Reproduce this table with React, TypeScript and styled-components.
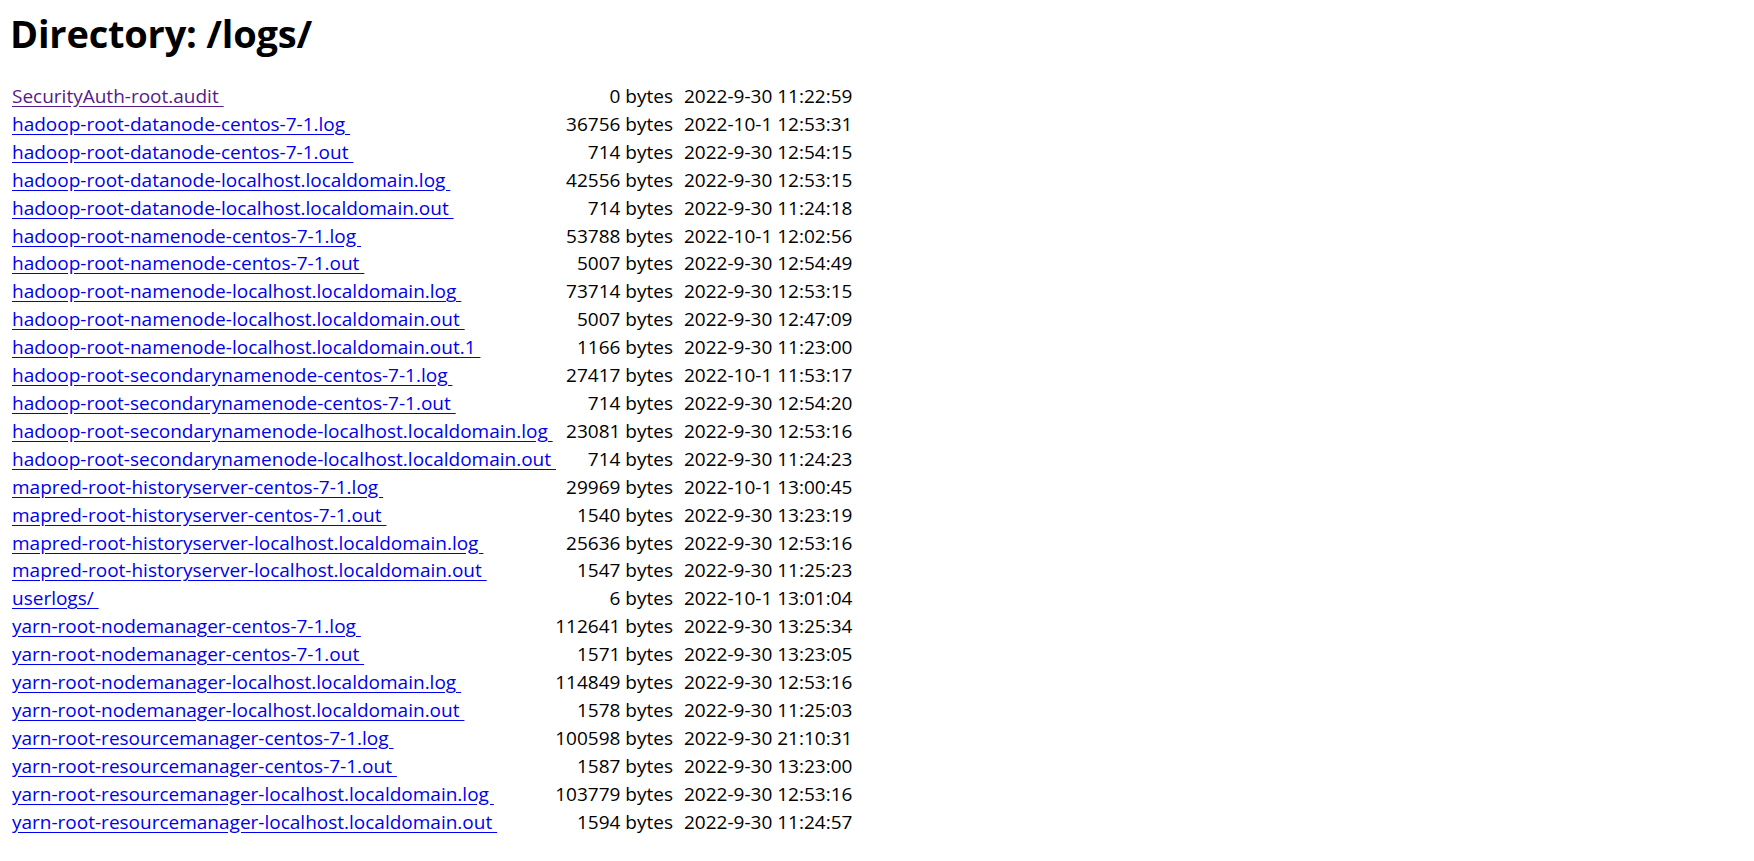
import React from "react";
import styled, { createGlobalStyle } from "styled-components";

const GlobalStyle = createGlobalStyle`
  html, body {
    margin: 0;
    padding: 0;
    background: #ffffff;
  }
  body {
    font-family: "Open Sans", "Noto Sans", "Noto Sans CJK SC", sans-serif;
    color: #000000;
  }
`;

const Page = styled.div`
  padding: 0 10px;
`;

const Title = styled.h1`
  margin: 0;
  padding-top: 6px;
  font-size: 38px;
  line-height: 54px;
  font-weight: 700;
  letter-spacing: -0.2px;
`;

const Listing = styled.div`
  display: grid;
  grid-template-columns: 440px 221px auto;
  margin-top: 23px;
  padding-left: 2px;
  font-size: 19px;
  line-height: 27.9px;
`;

const NameCell = styled.div`
  white-space: nowrap;
`;

const FileLink = styled.a<{ $visited?: boolean }>`
  color: ${(p) => (p.$visited ? "#551a8b" : "#0000ee")};
  text-decoration: underline;
  text-underline-offset: 3px;
  white-space: pre;
`;

const SizeCell = styled.div`
  text-align: right;
  white-space: nowrap;
`;

const DateCell = styled.div`
  padding-left: 11px;
  white-space: nowrap;
`;

type Entry = { name: string; size: number; date: string };

const entries: Entry[] = [
  { name: "SecurityAuth-root.audit", size: 0, date: "2022-9-30 11:22:59" },
  { name: "hadoop-root-datanode-centos-7-1.log", size: 36756, date: "2022-10-1 12:53:31" },
  { name: "hadoop-root-datanode-centos-7-1.out", size: 714, date: "2022-9-30 12:54:15" },
  { name: "hadoop-root-datanode-localhost.localdomain.log", size: 42556, date: "2022-9-30 12:53:15" },
  { name: "hadoop-root-datanode-localhost.localdomain.out", size: 714, date: "2022-9-30 11:24:18" },
  { name: "hadoop-root-namenode-centos-7-1.log", size: 53788, date: "2022-10-1 12:02:56" },
  { name: "hadoop-root-namenode-centos-7-1.out", size: 5007, date: "2022-9-30 12:54:49" },
  { name: "hadoop-root-namenode-localhost.localdomain.log", size: 73714, date: "2022-9-30 12:53:15" },
  { name: "hadoop-root-namenode-localhost.localdomain.out", size: 5007, date: "2022-9-30 12:47:09" },
  { name: "hadoop-root-namenode-localhost.localdomain.out.1", size: 1166, date: "2022-9-30 11:23:00" },
  { name: "hadoop-root-secondarynamenode-centos-7-1.log", size: 27417, date: "2022-10-1 11:53:17" },
  { name: "hadoop-root-secondarynamenode-centos-7-1.out", size: 714, date: "2022-9-30 12:54:20" },
  { name: "hadoop-root-secondarynamenode-localhost.localdomain.log", size: 23081, date: "2022-9-30 12:53:16" },
  { name: "hadoop-root-secondarynamenode-localhost.localdomain.out", size: 714, date: "2022-9-30 11:24:23" },
  { name: "mapred-root-historyserver-centos-7-1.log", size: 29969, date: "2022-10-1 13:00:45" },
  { name: "mapred-root-historyserver-centos-7-1.out", size: 1540, date: "2022-9-30 13:23:19" },
  { name: "mapred-root-historyserver-localhost.localdomain.log", size: 25636, date: "2022-9-30 12:53:16" },
  { name: "mapred-root-historyserver-localhost.localdomain.out", size: 1547, date: "2022-9-30 11:25:23" },
  { name: "userlogs/", size: 6, date: "2022-10-1 13:01:04" },
  { name: "yarn-root-nodemanager-centos-7-1.log", size: 112641, date: "2022-9-30 13:25:34" },
  { name: "yarn-root-nodemanager-centos-7-1.out", size: 1571, date: "2022-9-30 13:23:05" },
  { name: "yarn-root-nodemanager-localhost.localdomain.log", size: 114849, date: "2022-9-30 12:53:16" },
  { name: "yarn-root-nodemanager-localhost.localdomain.out", size: 1578, date: "2022-9-30 11:25:03" },
  { name: "yarn-root-resourcemanager-centos-7-1.log", size: 100598, date: "2022-9-30 21:10:31" },
  { name: "yarn-root-resourcemanager-centos-7-1.out", size: 1587, date: "2022-9-30 13:23:00" },
  { name: "yarn-root-resourcemanager-localhost.localdomain.log", size: 103779, date: "2022-9-30 12:53:16" },
  { name: "yarn-root-resourcemanager-localhost.localdomain.out", size: 1594, date: "2022-9-30 11:24:57" },
];

const App = () => {
  return (
    <Page>
      <GlobalStyle />
      <Title>Directory: /logs/</Title>
      <Listing>
        {entries.map((e, i) => (
          <React.Fragment key={e.name}>
            <NameCell>
              <FileLink href={"#" + e.name} $visited={i === 0}>
                {e.name + " "}
              </FileLink>
            </NameCell>
            <SizeCell>{e.size} bytes</SizeCell>
            <DateCell>{e.date}</DateCell>
          </React.Fragment>
        ))}
      </Listing>
    </Page>
  );
};

export default App;
